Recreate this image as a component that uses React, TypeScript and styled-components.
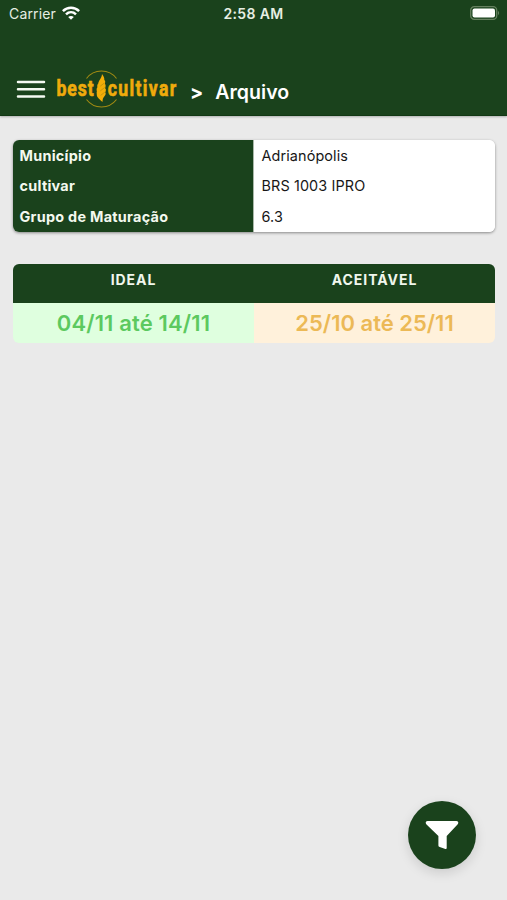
import React from "react";
import styled, { createGlobalStyle } from "styled-components";

const green = "#1a421c";

const GlobalStyle = createGlobalStyle`
  * { box-sizing: border-box; }
  body { margin: 0; background: #eaeaea; font-family: Inter, "Liberation Sans", sans-serif; }
`;

const Screen = styled.div`
  height: 900px;
  display: flex;
  flex-direction: column;
  background: #eaeaea;
  overflow: hidden;
`;

const Header = styled.header`
  height: 116px;
  flex: none;
  background: ${green};
  color: #fff;
  border-bottom: 1px solid #123814;
  box-shadow: 0 1px 2px rgba(0, 0, 0, 0.25);
`;

const StatusBar = styled.div`
  height: 26px;
  display: grid;
  grid-template-columns: 1fr auto 1fr;
  align-items: center;
  padding: 0 7px 0 9px;
  color: #e6eee3;
`;

const Carrier = styled.div`
  display: flex;
  align-items: center;
  gap: 6px;
  font-size: 14px;
  letter-spacing: 0.15px;
`;

const Clock = styled.div`
  margin-right: 2px;
  font-size: 14px;
  font-weight: 600;
  letter-spacing: 0.38px;
`;

const Battery = styled.svg`
  justify-self: end;
`;

const NavBar = styled.div`
  display: flex;
  align-items: center;
  height: 64px;
  margin-top: 31px;
  padding-left: 16px;
`;

const MenuButton = styled.button`
  display: flex;
  padding: 0;
  border: 0;
  background: none;
  margin-right: 10px;
`;

const LogoMark = styled.svg`
  overflow: visible;
`;

const LogoWord = styled.text`
  font-family: "Roboto", sans-serif;
  font-weight: 700;
  font-size: 21.5px;
  fill: #efab0c;
  stroke: #efab0c;
  stroke-width: 0.6;
`;

const Crumb = styled.span`
  margin: 5px 0 0 8px;
  font-size: 19.5px;
  font-weight: 700;
`;

const Title = styled.h1`
  margin: 5px 0 0 12px;
  font-size: 19.5px;
  line-height: 24px;
  font-weight: 600;
  letter-spacing: 0.05px;
`;

const Content = styled.main`
  padding: 24px 12px 0 13px;
`;

const InfoCard = styled.section`
  display: grid;
  grid-template-columns: 1fr 1fr;
  height: 92px;
  background: #fff;
  border-radius: 6px;
  overflow: hidden;
  box-shadow: 0 1px 3px rgba(0, 0, 0, 0.42);
`;

const InfoColumn = styled.div<{ $labels?: boolean }>`
  display: grid;
  grid-template-rows: repeat(3, 30.5px);
  align-items: center;
  padding: 0 0 0 ${(p) => (p.$labels ? "6.5px" : "7.5px")};
  font-size: 14.4px;
  letter-spacing: ${(p) => (p.$labels ? "0.28px" : "0.12px")};
  font-weight: ${(p) => (p.$labels ? 700 : 400)};
  color: ${(p) => (p.$labels ? "#f4f9ef" : "#171717")};
  background: ${(p) => (p.$labels ? green : "#fff")};
  border-right: ${(p) => (p.$labels ? "1px solid #a9b8a9" : "0")};
`;

const Periods = styled.section`
  display: grid;
  grid-template-columns: 1fr 1fr;
  margin-top: 31.5px;
  border-radius: 6px;
  overflow: hidden;
`;

const PeriodHead = styled.div`
  height: 39px;
  padding-top: 7px;
  background: ${green};
  color: #f0f7ed;
  text-align: center;
  font-size: 14px;
  line-height: 18px;
  font-weight: 700;
  letter-spacing: 0.95px;
`;

const PeriodValue = styled.div<{ $tone: "ideal" | "fair" }>`
  height: 40px;
  line-height: 40px;
  text-align: center;
  font-size: 22px;
  font-weight: 600;
  letter-spacing: ${(p) => (p.$tone === "ideal" ? "0.15px" : "0")};
  color: ${(p) => (p.$tone === "ideal" ? "#5cc95f" : "#ecb956")};
  background: ${(p) => (p.$tone === "ideal" ? "#dfffdf" : "#fff1db")};
`;

const FilterButton = styled.button`
  position: fixed;
  right: 31px;
  bottom: 31px;
  width: 68px;
  height: 68px;
  padding: 0;
  display: grid;
  place-items: center;
  border: 0;
  border-radius: 50%;
  background: ${green};
  box-shadow: 0 4px 12px rgba(0, 0, 0, 0.13);
`;

const WifiIcon = () => (
  <svg width="18" height="14" viewBox="0 0 18 14" fill="none" stroke="#fff" strokeWidth="2.5">
    <path d="M.9 5.1C5.5.6 12.5.6 17.1 5.1" />
    <path d="M4 8.4c2.9-2.8 7.1-2.8 10 0" />
    <path d="M6.2 11c1.6-1.5 4-1.5 5.6 0L9 13.8Z" fill="#fff" stroke="none" />
  </svg>
);

const Logo = () => (
  <LogoMark width="126" height="42" viewBox="0 0 126 42" role="img" aria-label="bestcultivar">
    <g fill="none" stroke="#a28b13" strokeWidth="1.1">
      <path d="M30.5 10.5A18.8 18.8 0 0 1 60.5 10.5" />
      <path d="M30.5 31.5A18.8 18.8 0 0 0 60.5 31.5" />
    </g>
    <LogoWord x="0.5" y="28.5" transform="scale(.82 1)" textLength="45.5" lengthAdjust="spacing">best</LogoWord>
    <path
      fill="#f2ad08"
      d="M46 6c1.8 2.4 2.6 4.4 2.3 6.3 1.3-.6.9 2.7.5 4 1.2-.4.9 2.7.3 4.2 1.2-.3.9 2.8.1 4.2 1 0 .5 2.6-1.3 4.2-1.1 1.1-1.3 2.8-1.4 5.2-2.1-2.1-5.6-4.4-5.7-7 .2-1.1-.5-2.7.1-3.8-.5-1.5-.3-3 .5-4-.5-1.7.1-3.2 1-4-.4-1.8 3.5-5.3 3.6-9.3Z"
    />
    <path d="m48.4 15-4.2 3.2m4.6 1.2-4.6 3.6m4.6 1.2-4.2 3.2" stroke="#a88a0b" strokeWidth=".6" />
    <LogoWord x="63" y="28.5" transform="scale(.82 1)" textLength="83.7" lengthAdjust="spacing">cultivar</LogoWord>
  </LogoMark>
);

const info = [
  ["Município", "Adrianópolis"],
  ["cultivar", "BRS 1003 IPRO"],
  ["Grupo de Maturação", "6.3"],
];

export default function App() {
  return (
    <Screen>
      <GlobalStyle />
      <Header>
        <StatusBar>
          <Carrier>Carrier <WifiIcon /></Carrier>
          <Clock>2:58 AM</Clock>
          <Battery width="30" height="14" viewBox="0 0 30 14">
            <rect x=".7" y=".7" width="26" height="12.6" rx="3.6" fill="none" stroke="#65805f" strokeWidth="1.3" />
            <rect x="2.5" y="2.5" width="22.5" height="9" rx="2" fill="#fff" />
            <path d="M28 5c1.5.6 1.5 3.4 0 4Z" fill="#65805f" />
          </Battery>
        </StatusBar>
        <NavBar>
          <MenuButton aria-label="Menu">
            <svg width="30" height="20" viewBox="0 0 30 20" stroke="#f5faf2" strokeWidth="2.5" strokeLinecap="round">
              <path d="M2 3h26M2 10.2h26M2 17.4h26" />
            </svg>
          </MenuButton>
          <Logo />
          <Crumb>&gt;</Crumb>
          <Title>Arquivo</Title>
        </NavBar>
      </Header>
      <Content>
        <InfoCard>
          <InfoColumn $labels>{info.map(([label]) => <span key={label}>{label}</span>)}</InfoColumn>
          <InfoColumn>{info.map(([label, value]) => <span key={label}>{value}</span>)}</InfoColumn>
        </InfoCard>
        <Periods>
          <PeriodHead>IDEAL</PeriodHead>
          <PeriodHead>ACEITÁVEL</PeriodHead>
          <PeriodValue $tone="ideal">04/11 até 14/11</PeriodValue>
          <PeriodValue $tone="fair">25/10 até 25/11</PeriodValue>
        </Periods>
      </Content>
      <FilterButton aria-label="Filtrar">
        <svg width="34" height="30" viewBox="0 0 34 30">
          <path
            d="M2.5 1h29q1.8 0 1.8 1.6 0 1-.8 1.9L21.7 16v12q0 1.4-1.3 1l-5.7-2.1q-1.3-.5-1.3-1.5V16L1.5 4.5Q.7 3.6.7 2.6.7 1 2.5 1Z"
            fill="#fff"
          />
        </svg>
      </FilterButton>
    </Screen>
  );
}
